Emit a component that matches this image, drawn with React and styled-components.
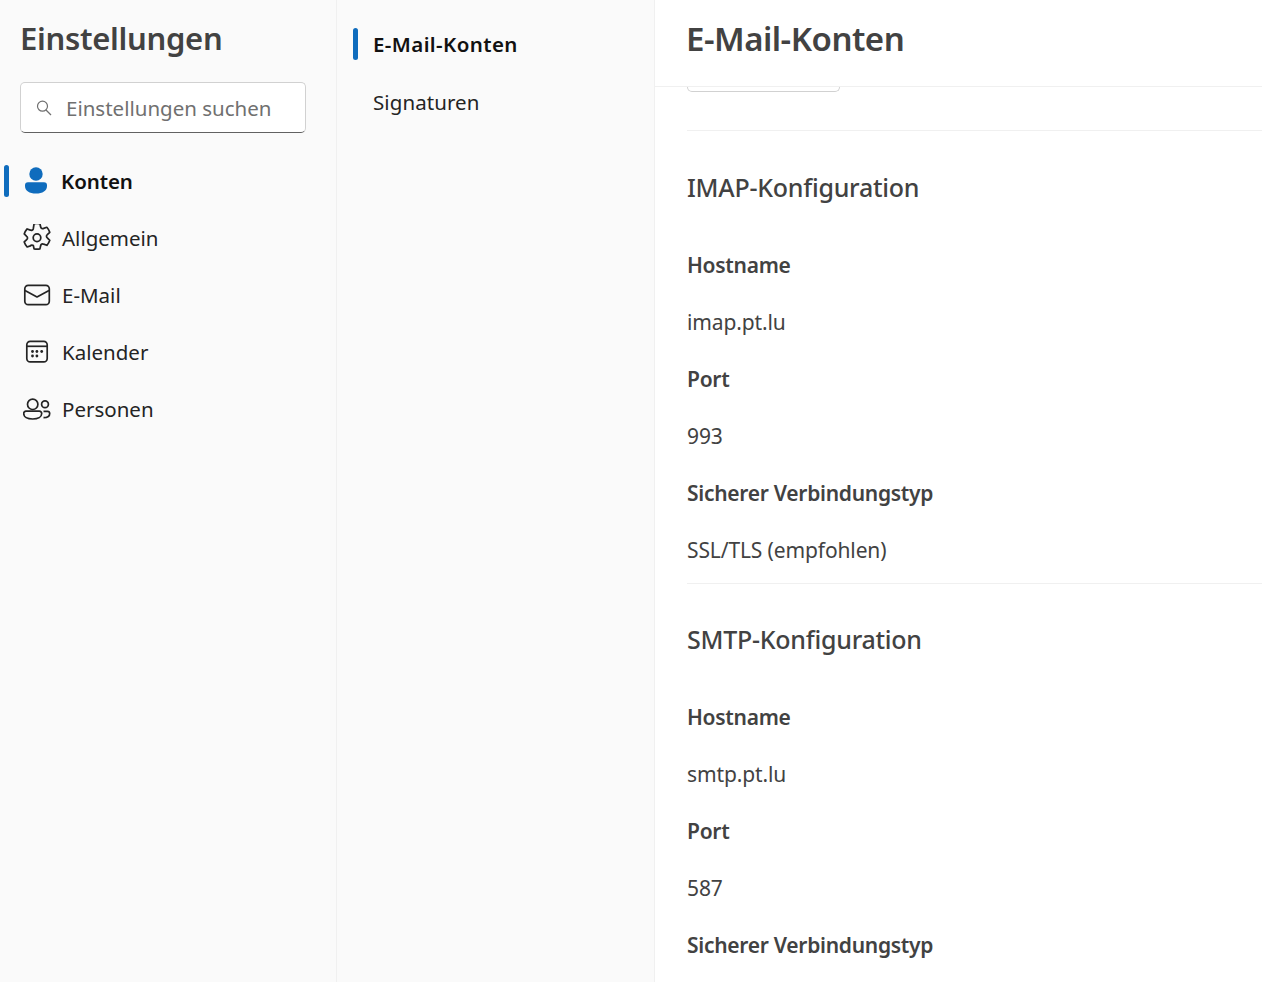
import React from 'react';
import styled, { createGlobalStyle } from 'styled-components';

const GlobalStyle = createGlobalStyle`
  html, body { margin: 0; padding: 0; height: 100%; overflow: hidden; }
  body { font-family: "Noto Sans", "Open Sans", sans-serif; background: #fff; }
`;

const Page = styled.div`
  display: flex;
  width: 1262px;
  height: 982px;
  overflow: hidden;
`;

const Sidebar = styled.aside`
  width: 336px;
  flex-shrink: 0;
  background: #fafafa;
  border-right: 1px solid #f0f0f0;
`;

const SideTitle = styled.h1`
  margin: 0;
  padding: 17px 0 0 20px;
  height: 65px;
  box-sizing: border-box;
  font-size: 31px;
  line-height: 42px;
  font-weight: 600;
  letter-spacing: -0.3px;
  color: #424242;
`;

const Search = styled.div`
  display: flex;
  align-items: center;
  gap: 14px;
  box-sizing: border-box;
  width: 286px;
  height: 51px;
  margin: 17px 0 19px 20px;
  padding-left: 15px;
  background: #fff;
  border: 1px solid #d1d1d1;
  border-bottom-color: #616161;
  border-radius: 5px;
`;

const SearchText = styled.span`
  font-size: 20.5px;
  color: #707070;
`;

const NavList = styled.nav`
  display: flex;
  flex-direction: column;
`;

const NavRow = styled.div`
  position: relative;
  display: flex;
  align-items: center;
  height: 57px;
  padding-left: 23px;
  gap: ${(p) => (p.$active ? 10 : 11)}px;
  font-size: 20.5px;
  letter-spacing: ${(p) => (p.$active ? '-0.1px' : '0')};
  font-weight: ${(p) => (p.$active ? 600 : 400)};
  color: ${(p) => (p.$active ? '#111' : '#242424')};
`;

const ActiveBar = styled.span`
  position: absolute;
  left: ${(p) => p.$left}px;
  top: ${(p) => p.$top}px;
  width: 5px;
  height: 32px;
  border-radius: 3px;
  background: #0f6cbd;
`;

const IconSlot = styled.span`
  display: flex;
  width: 28px;
  height: 28px;
  flex-shrink: 0;
`;

const SubPanel = styled.div`
  width: 318px;
  flex-shrink: 0;
  padding-top: 15px;
  box-sizing: border-box;
  background: #fafafa;
  border-right: 1px solid #f0f0f0;
`;

const SubRow = styled.div`
  position: relative;
  display: flex;
  align-items: center;
  height: 58px;
  padding-left: 36px;
  font-size: 20.5px;
  letter-spacing: ${(p) => (p.$active ? '0.4px' : '0.08px')};
  font-weight: ${(p) => (p.$active ? 600 : 400)};
  color: ${(p) => (p.$active ? '#111' : '#242424')};
`;

const Main = styled.main`
  flex: 1;
  min-width: 0;
  display: flex;
  flex-direction: column;
  background: #fff;
`;

const MainHeader = styled.header`
  height: 87px;
  flex-shrink: 0;
  box-sizing: border-box;
  padding: 17px 0 0 31px;
  border-bottom: 1px solid #f0f0f0;
  font-size: 33px;
  line-height: 44px;
  font-weight: 600;
  letter-spacing: -0.5px;
  color: #424242;
`;

const Scroller = styled.div`
  flex: 1;
  overflow: hidden;
  padding-left: 32px;
`;

const ButtonStub = styled.div`
  width: 153px;
  height: 5px;
  box-sizing: border-box;
  border: 1px solid #d1d1d1;
  border-top: none;
  border-radius: 0 0 5px 5px;
`;

const Section = styled.section`
  border-top: 1px solid #f0f0f0;
  margin-top: ${(p) => p.$top}px;
`;

const SectionTitle = styled.h2`
  margin: 0;
  height: ${(p) => (p.$tight ? 104 : 105)}px;
  padding-top: ${(p) => (p.$tight ? 37 : 38)}px;
  box-sizing: border-box;
  font-size: 25px;
  line-height: 36px;
  font-weight: 500;
  letter-spacing: -0.25px;
  color: #424242;
`;

const FieldRow = styled.div`
  display: flex;
  align-items: center;
  height: 57px;
  font-size: 21px;
  letter-spacing: ${(p) => (p.$label ? '-0.28px' : '-0.12px')};
  font-weight: ${(p) => (p.$label ? 600 : 400)};
  color: #424242;
`;

const PersonIcon = () => (
  <svg width="28" height="28" viewBox="0 0 28 28" fill="#0f6cbd">
    <circle cx="13" cy="7" r="6.7" />
    <path d="M5 15.2h16a3 3 0 0 1 3 3v.8c0 4.6-4.4 7.6-11 7.6S2 23.6 2 19v-.8a3 3 0 0 1 3-3z" />
  </svg>
);

const GearIcon = () => (
  <svg width="28" height="28" viewBox="0 0 28 28" fill="none" stroke="#242424" strokeWidth="1.55" strokeLinejoin="round">
    <g transform="translate(14 13.8) scale(1.12) translate(-13.9 -14.2)">
      <path d="M11.3 1.6a12.6 12.6 0 0 1 5.2 0l.7 3a1.8 1.8 0 0 0 2.6 1.2l2.9-1a12.6 12.6 0 0 1 2.6 4.5l-2.2 2.1a1.8 1.8 0 0 0 0 2.9l2.2 2.1a12.6 12.6 0 0 1-2.6 4.5l-2.9-1a1.8 1.8 0 0 0-2.6 1.2l-.7 3a12.6 12.6 0 0 1-5.2 0l-.7-3A1.8 1.8 0 0 0 8 21.4l-2.9 1a12.6 12.6 0 0 1-2.6-4.5l2.2-2.1a1.8 1.8 0 0 0 0-2.9L2.5 10.8a12.6 12.6 0 0 1 2.6-4.5l2.9 1a1.8 1.8 0 0 0 2.6-1.2z" />
      <circle cx="13.9" cy="14.2" r="3.4" />
    </g>
  </svg>
);

const MailIcon = () => (
  <svg width="28" height="28" viewBox="0 0 28 28" fill="none" stroke="#242424" strokeWidth="1.7" strokeLinejoin="round">
    <rect x="1.8" y="4.3" width="24.5" height="19.4" rx="3.4" />
    <path d="M2 9.6 14 16l12-6.4" />
  </svg>
);

const CalendarIcon = () => (
  <svg width="28" height="28" viewBox="0 0 28 28" fill="none" stroke="#242424" strokeWidth="1.7">
    <rect x="3.8" y="3.3" width="20.4" height="20.5" rx="3.4" />
    <path d="M3.8 8.3h20.4" />
    <g fill="#242424" stroke="none">
      <circle cx="9.5" cy="13.5" r="1.4" />
      <circle cx="13.9" cy="13.5" r="1.4" />
      <circle cx="18.7" cy="13.5" r="1.4" />
      <circle cx="9.5" cy="18" r="1.4" />
      <circle cx="13.9" cy="18" r="1.4" />
    </g>
  </svg>
);

const PeopleIcon = () => (
  <svg width="28" height="28" viewBox="0 0 28 28" fill="none" stroke="#242424" strokeWidth="1.7">
    <circle cx="9.7" cy="9.3" r="5.2" />
    <path d="M3 16.2h13.4a2.3 2.3 0 0 1 2.3 2.3c0 3.3-3.6 5.5-9 5.5s-9-2.2-9-5.5A2.3 2.3 0 0 1 3 16.2z" />
    <circle cx="22" cy="9.3" r="3.4" />
    <path d="M20.5 16.4h4a2.2 2.2 0 0 1 2.2 2.1c0 2.6-2.4 4.2-6.2 4.2" />
  </svg>
);

const SearchIcon = () => (
  <svg width="16" height="16" viewBox="0 0 16 16" fill="none" stroke="#707070" strokeWidth="1.2">
    <circle cx="6.5" cy="6.2" r="5" />
    <path d="m10 10 5 5" />
  </svg>
);

const navItems = [
  { label: 'Konten', icon: <PersonIcon />, active: true },
  { label: 'Allgemein', icon: <GearIcon /> },
  { label: 'E-Mail', icon: <MailIcon /> },
  { label: 'Kalender', icon: <CalendarIcon /> },
  { label: 'Personen', icon: <PeopleIcon /> },
];

const imapFields = [
  ['Hostname', 'imap.pt.lu'],
  ['Port', '993'],
  ['Sicherer Verbindungstyp', 'SSL/TLS (empfohlen)'],
];

// the last value lies below the fold in the screenshot
const smtpFields = [
  ['Hostname', 'smtp.pt.lu'],
  ['Port', '587'],
  ['Sicherer Verbindungstyp', null],
];

const Fields = ({ fields }) =>
  fields.map(([label, value]) => (
    <React.Fragment key={label}>
      <FieldRow $label>{label}</FieldRow>
      {value && <FieldRow>{value}</FieldRow>}
    </React.Fragment>
  ));

export default function App() {
  return (
    <Page>
      <GlobalStyle />
      <Sidebar>
        <SideTitle>Einstellungen</SideTitle>
        <Search>
          <SearchIcon />
          <SearchText>Einstellungen suchen</SearchText>
        </Search>
        <NavList>
          {navItems.map((item) => (
            <NavRow key={item.label} $active={item.active}>
              {item.active && <ActiveBar $left={4} $top={13} />}
              <IconSlot>{item.icon}</IconSlot>
              {item.label}
            </NavRow>
          ))}
        </NavList>
      </Sidebar>
      <SubPanel>
        <SubRow $active>
          <ActiveBar $left={16} $top={13} />
          E-Mail-Konten
        </SubRow>
        <SubRow>Signaturen</SubRow>
      </SubPanel>
      <Main>
        <MainHeader>E-Mail-Konten</MainHeader>
        <Scroller>
          <ButtonStub />
          <Section $top={38}>
            <SectionTitle>IMAP-Konfiguration</SectionTitle>
            <Fields fields={imapFields} />
          </Section>
          <Section $top={5}>
            <SectionTitle $tight>SMTP-Konfiguration</SectionTitle>
            <Fields fields={smtpFields} />
          </Section>
        </Scroller>
      </Main>
    </Page>
  );
}
